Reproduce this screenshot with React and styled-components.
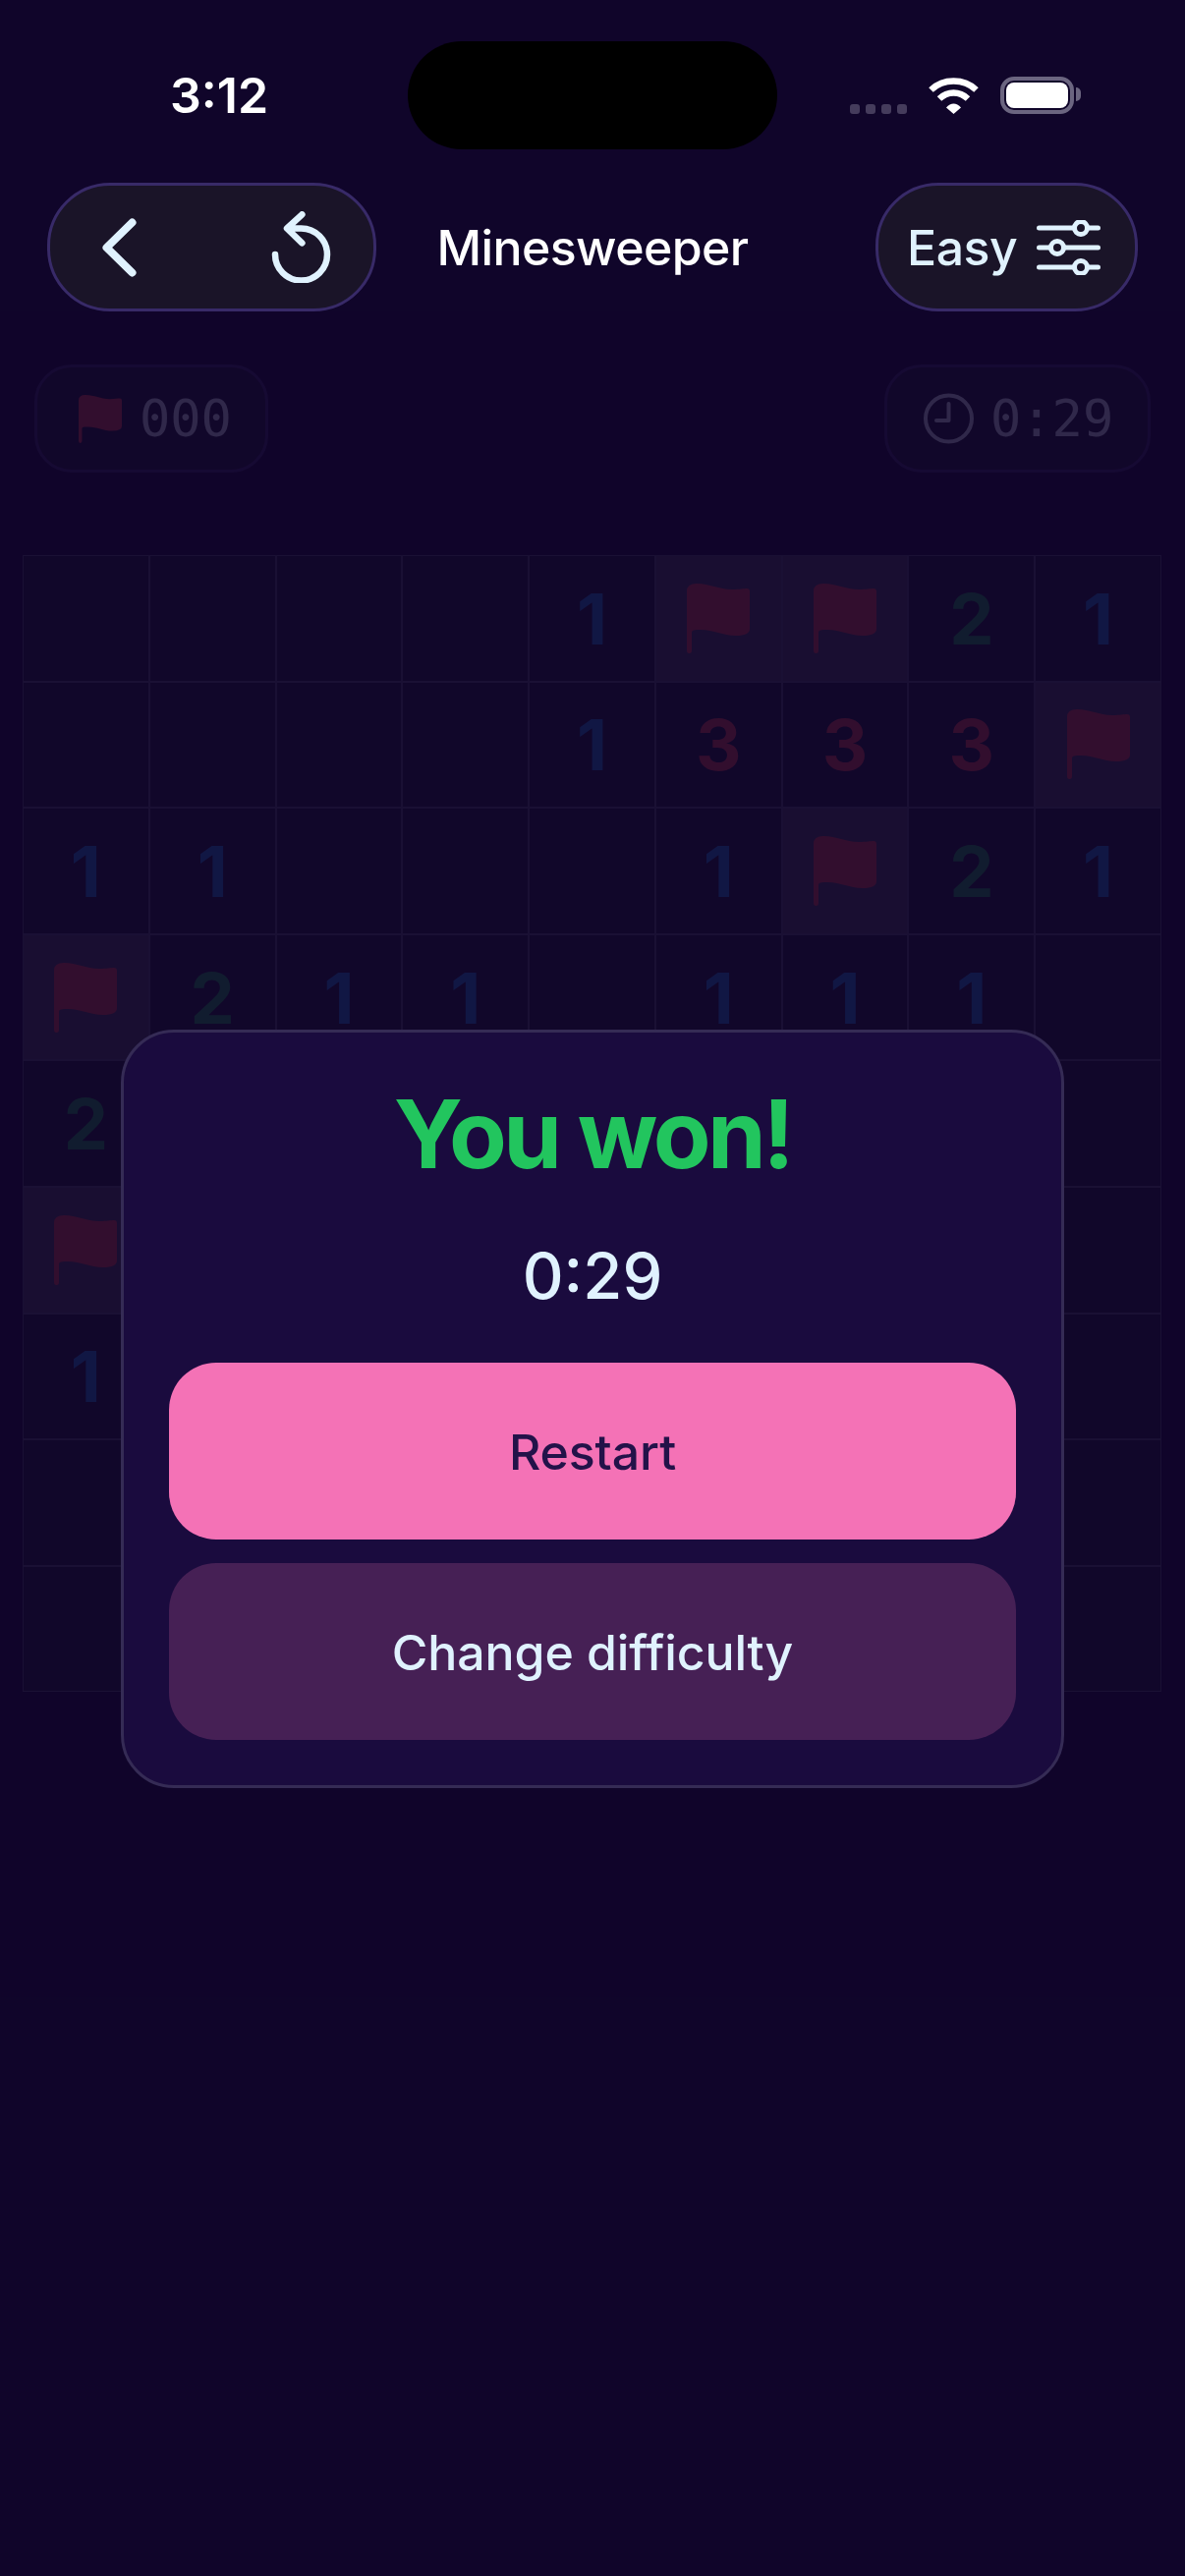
import styled, { createGlobalStyle } from "styled-components";

const PAGE = "#10052a";
const ICE = "#e0f2fe";
const PILL = "#1a1428";
const PILL_LINE = "#382a68";
const NUMBER_COLORS = { 1: "#1a80d8", 2: "#16a34a", 3: "#ef4444" };

const BOARD = [
  "....1FF21",
  "....1333F",
  "11...1F21",
  "F211.111.",
  "2........",
  "F........",
  "1........",
  ".........",
  ".........",
];

const GlobalStyle = createGlobalStyle`
  html, body {
    margin: 0;
    padding: 0;
    background: ${PAGE};
  }
  * {
    box-sizing: border-box;
  }
`;

const Screen = styled.div`
  width: 1206px;
  min-height: 2622px;
  display: flex;
  flex-direction: column;
  background: ${PAGE};
  font-family: Inter, "Noto Sans", sans-serif;
  color: ${ICE};
`;

const StatusBar = styled.div`
  display: grid;
  grid-template-columns: 415px 376px 1fr;
  height: 110px;
  margin-top: 42px;
  align-items: center;
`;

const Clock = styled.div`
  padding-left: 173px;
  font-size: 50px;
  font-weight: 600;
  color: #fff;
`;

const Island = styled.div`
  height: 110px;
  border-radius: 55px;
  background: #000;
`;

const StatusIcons = styled.div`
  display: flex;
  align-items: center;
  padding-left: 74px;
`;

const Signal = styled.div`
  display: flex;
  gap: 6px;
  margin-top: 28px;
  margin-right: 22px;
`;

const SignalDot = styled.span`
  width: 10px;
  height: 10px;
  border-radius: 3px;
  background: #453c5c;
`;

const Battery = styled.div`
  position: relative;
  width: 75px;
  height: 38px;
  margin-left: 22px;
  padding: 2px;
  border: 4px solid #6b6580;
  border-radius: 14px;

  &::before {
    content: "";
    display: block;
    width: 100%;
    height: 100%;
    border-radius: 8px;
    background: #fff;
  }

  &::after {
    content: "";
    position: absolute;
    right: -11px;
    top: 7px;
    width: 5px;
    height: 14px;
    border-radius: 0 6px 6px 0;
    background: #6b6580;
  }
`;

const Header = styled.header`
  position: relative;
  z-index: 3;
  display: grid;
  grid-template-columns: 1fr auto 1fr;
  align-items: center;
  height: 131px;
  margin-top: 34px;
  padding: 0 48px;
`;

const Pill = styled.div`
  height: 131px;
  display: flex;
  align-items: center;
  background: ${PILL};
  border: 3px solid ${PILL_LINE};
  border-radius: 64px;
`;

const NavPill = styled(Pill)`
  width: 335px;
  justify-content: space-between;
  padding: 0 43px 0 53px;
`;

const LevelPill = styled(Pill)`
  width: 267px;
  justify-self: end;
  gap: 20px;
  padding-left: 29px;
  font-size: 50px;
  font-weight: 500;
  letter-spacing: -0.5px;
`;

const Title = styled.h1`
  margin: 0;
  font-size: 50px;
  font-weight: 500;
  letter-spacing: -0.6px;
  color: #fff;
`;

const Game = styled.main`
  position: relative;
  flex: 1;
  padding-top: 54px;
`;

const Stats = styled.div`
  display: flex;
  justify-content: space-between;
  padding: 0 35px;
`;

const Stat = styled.div`
  width: ${(props) => props.$width}px;
  height: 110px;
  display: flex;
  align-items: center;
  gap: ${(props) => props.$gap}px;
  padding-left: ${(props) => props.$pad}px;
  background: ${PILL};
  border: 3px solid ${PILL_LINE};
  border-radius: 38px;
`;

const StatValue = styled.span`
  font-family: "DejaVu Sans Mono", monospace;
  font-size: 52px;
  color: ${ICE};
`;

const Board = styled.div`
  display: grid;
  grid-template-columns: repeat(9, 1fr);
  grid-auto-rows: 128.6px;
  width: 1159px;
  margin: 84px 0 0 23px;
`;

const Cell = styled.div`
  display: flex;
  align-items: center;
  justify-content: center;
  background: ${(props) => (props.$flagged ? "#4a4458" : PILL)};
  border: 1px solid #55516a;
  font-size: 72px;
  font-weight: 700;
  color: ${(props) => NUMBER_COLORS[props.$value] || "transparent"};
`;

const Overlay = styled.div`
  position: absolute;
  inset: 0;
  z-index: 2;
  display: flex;
  justify-content: center;
  align-items: flex-start;
  padding-top: 731px;
  background: rgba(16, 5, 42, 0.85);
`;

const Dialog = styled.section`
  width: 960px;
  display: flex;
  flex-direction: column;
  align-items: center;
  padding: 45px 46px 46px;
  background: #1a0b3e;
  border: 3px solid #352b55;
  border-radius: 54px;
`;

const Won = styled.h2`
  margin: 0;
  font-size: 96px;
  line-height: 116px;
  font-weight: 700;
  letter-spacing: -3.5px;
  color: #22c55e;
`;

const Time = styled.div`
  margin: 47px 0 48px;
  font-size: 65px;
  line-height: 80px;
  font-weight: 500;
  color: ${ICE};
`;

const Actions = styled.div`
  width: 100%;
  display: flex;
  flex-direction: column;
  gap: 24px;
`;

const ActionButton = styled.button`
  height: 180px;
  padding: 2px 0 0;
  border: none;
  border-radius: 48px;
  font-family: inherit;
  font-size: 50px;
  font-weight: 500;
  letter-spacing: -0.1px;
  background: ${(props) => (props.$primary ? "#f472b6" : "#462055")};
  color: ${(props) => (props.$primary ? "#231249" : ICE)};
`;

function WifiIcon() {
  return (
    <svg width="51" height="37" viewBox="0 0 51 37" fill="none">
      <path d="M2.5 12.5C15 0.5 36 0.5 48.5 12.5" stroke="#fff" strokeWidth="6.5" />
      <path d="M11 21.5C19.5 13.5 31.5 13.5 40 21.5" stroke="#fff" strokeWidth="6.5" />
      <path d="M18 30.5C22.5 25 28.5 25 33 30.5L25.5 37Z" fill="#fff" />
    </svg>
  );
}

function BackIcon() {
  return (
    <svg width="35" height="60" viewBox="0 0 35 60" fill="none">
      <path d="M30.5 4.5L4.5 30L30.5 55.5" stroke={ICE} strokeWidth="8" strokeLinecap="round" strokeLinejoin="round" />
    </svg>
  );
}

function RestartIcon() {
  return (
    <svg width="61" height="73" viewBox="0 0 61 73" fill="none">
      <path
        d="M4 44A26.5 26.5 0 1 0 30.5 17.5H16.5M31.4 3.3L16 17.5L31.4 32.3"
        stroke={ICE}
        strokeWidth="6.5"
        strokeLinecap="round"
        strokeLinejoin="round"
      />
    </svg>
  );
}

function SlidersIcon() {
  return (
    <svg width="65" height="56" viewBox="0 0 65 56" fill="none" stroke={ICE} strokeWidth="5" strokeLinecap="round">
      <path d="M2.5 8H62.5M2.5 28H62.5M2.5 48H62.5" />
      <circle cx="45" cy="8" r="6.5" fill={PILL} />
      <circle cx="21" cy="28" r="6.5" fill={PILL} />
      <circle cx="45" cy="48" r="6.5" fill={PILL} />
    </svg>
  );
}

function FlagIcon({ width, height }) {
  return (
    <svg width={width} height={height} viewBox="0 0 64 71" fill="#ef4444">
      <path d="M0 8Q0 0 10 0C24 0 32 6 46 6C54 6 58 5 61 5Q64 5 64 8V46Q64 53 50 53C36 53 28 47 14 47C8 47 5 47 5 50V68Q5 71 2.5 71Q0 71 0 68Z" />
    </svg>
  );
}

function TimerIcon() {
  return (
    <svg width="51" height="52" viewBox="0 0 51 52" fill="none" stroke={ICE} strokeWidth="4" strokeLinecap="round" strokeLinejoin="round">
      <circle cx="25.5" cy="26" r="23.5" />
      <path d="M25.5 11V28H13" />
    </svg>
  );
}

function App() {
  return (
    <Screen>
      <GlobalStyle />
      <StatusBar>
        <Clock>3:12</Clock>
        <Island />
        <StatusIcons>
          <Signal>
            {[0, 1, 2, 3].map((dot) => (
              <SignalDot key={dot} />
            ))}
          </Signal>
          <WifiIcon />
          <Battery />
        </StatusIcons>
      </StatusBar>

      <Header>
        <NavPill>
          <BackIcon />
          <RestartIcon />
        </NavPill>
        <Title>Minesweeper</Title>
        <LevelPill>
          Easy
          <SlidersIcon />
        </LevelPill>
      </Header>

      <Game>
        <Stats>
          <Stat $width={238} $gap={18} $pad={42}>
            <FlagIcon width={44} height={49} />
            <StatValue>000</StatValue>
          </Stat>
          <Stat $width={271} $gap={17} $pad={37}>
            <TimerIcon />
            <StatValue>0:29</StatValue>
          </Stat>
        </Stats>

        <Board>
          {BOARD.flatMap((row, y) =>
            row.split("").map((value, x) => (
              <Cell key={`${x}-${y}`} $flagged={value === "F"} $value={value}>
                {value === "F" ? <FlagIcon width={64} height={71} /> : value === "." ? "" : value}
              </Cell>
            ))
          )}
        </Board>

        <Overlay>
          <Dialog>
            <Won>You won!</Won>
            <Time>0:29</Time>
            <Actions>
              <ActionButton $primary>Restart</ActionButton>
              <ActionButton>Change difficulty</ActionButton>
            </Actions>
          </Dialog>
        </Overlay>
      </Game>
    </Screen>
  );
}

export default App;
